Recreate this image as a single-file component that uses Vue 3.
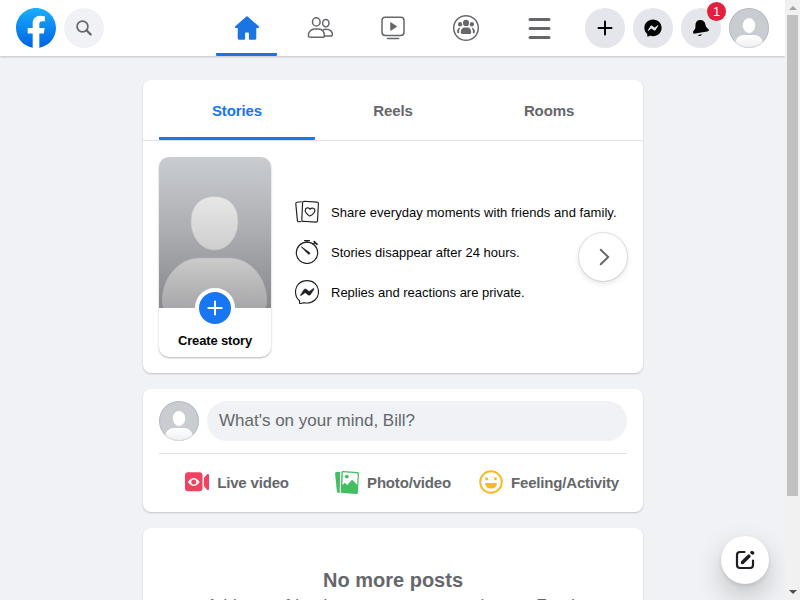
<script setup>
const storyTabs = ['Stories', 'Reels', 'Rooms']
</script>

<template>
  <div class="window">
    <div class="page">
      <header class="topbar">
        <div class="brand">
          <svg class="logo" viewBox="0 0 36 36">
            <defs>
              <linearGradient id="fb" x1="0" y1="0" x2="0" y2="1">
                <stop offset="0" stop-color="#19afff" />
                <stop offset="1" stop-color="#0062e0" />
              </linearGradient>
            </defs>
            <path fill="url(#fb)" d="M15 35.8C6.5 34.3 0 26.9 0 18 0 8.1 8.1 0 18 0s18 8.1 18 18c0 8.9-6.5 16.3-15 17.8l-1-.8h-4l-1 .8z" />
            <path fill="#fff" d="M25 23l.8-5H21v-3.500c0-1.400.5-2.500 2.700-2.500H26V7.400c-1.300-.2-2.700-.4-4-.4-4.100 0-7 2.500-7 7v4h-4.500v5H15v12.700c1 .2 2 .3 3 .3s2-.1 3-.3V23h4z" />
          </svg>
          <div class="search">
            <svg width="20" height="20" viewBox="0 0 20 20" fill="none" stroke="#65676b">
              <circle cx="8.500" cy="8.500" r="5.400" stroke-width="1.700" />
              <path d="M12.500 12.300l4.200 4.200" stroke-width="2.300" stroke-linecap="round" />
            </svg>
          </div>
        </div>

        <nav class="nav">
          <a class="nav-item active">
            <svg width="28" height="28" viewBox="0 0 28 28" fill="#1b74e4">
              <path d="M25.700 12.300 15.200 2.900a1.800 1.800 0 0 0-2.400 0L2.300 12.300c-.8.700-.4 1.700.6 1.700H4.700v10.200c0 .9.600 1.500 1.500 1.500h5.100c.5 0 .8-.3.800-.8v-5.700c0-.5.300-.8.800-.8h2.200c.5 0 .8.300.8.800v5.700c0 .5.300.8.800.8h5.100c.9 0 1.500-.6 1.500-1.500V14h1.800c1 0 1.400-1 .6-1.700z" />
            </svg>
          </a>
          <a class="nav-item">
            <svg width="28" height="28" viewBox="0 0 28 28" fill="none" stroke="#65676b" stroke-width="1.500">
              <ellipse cx="10.300" cy="7.900" rx="3.800" ry="4.200" />
              <ellipse cx="19.800" cy="9.100" rx="3.200" ry="3.600" />
              <path d="M8.500 15h4.300c3.600 0 5.600 3.200 5.600 6.400 0 1.300-.6 1.900-1.800 1.900H4.200c-1.200 0-1.800-.6-1.800-1.900C2.400 18.200 4.900 15 8.500 15z" />
              <path d="M16.600 15.800c1-.5 2-.6 3.700-.6 4 0 6.100 2.800 6.100 5.200 0 1.100-.7 1.600-1.900 1.600h-6" />
            </svg>
          </a>
          <a class="nav-item">
            <svg width="28" height="28" viewBox="0 0 28 28" fill="none" stroke="#65676b" stroke-width="1.500">
              <rect x="3" y="3.300" width="22" height="18.200" rx="3.200" />
              <path d="M8.500 24.500h11" stroke-linecap="round" />
              <path d="M11.200 9v7c0 .6.500.8 1 .5l5.400-3.500c.4-.3.400-.8 0-1l-5.400-3.500c-.5-.3-1-.1-1 .5z" fill="#65676b" stroke="none" />
            </svg>
          </a>
          <a class="nav-item">
            <svg width="28" height="28" viewBox="0 0 28 28" fill="#65676b">
              <circle cx="14" cy="14" r="12.300" fill="none" stroke="#65676b" stroke-width="1.500" />
              <ellipse cx="14" cy="8.900" rx="3" ry="3.200" />
              <ellipse cx="8.100" cy="10.300" rx="2.100" ry="2.200" />
              <ellipse cx="19.900" cy="10.300" rx="2.100" ry="2.200" />
              <path d="M12.100 13.600h3.800c2 0 3.300 2.200 3.300 4.700 0 1.100-.6 1.800-1.700 1.800h-7c-1.100 0-1.700-.7-1.700-1.800 0-2.500 1.300-4.700 3.300-4.700zM8.300 13.800c-1 1.400-1.400 3.300-1.100 5.400H6.200c-.7 0-1.100-.5-1.100-1.200 0-2.400 1.200-4.300 3.200-4.200zM19.700 13.800c1 1.400 1.400 3.300 1.100 5.400h1c.7 0 1.100-.5 1.100-1.200 0-2.400-1.200-4.300-3.200-4.200z" />
            </svg>
          </a>
          <a class="nav-item">
            <svg width="28" height="28" viewBox="0 0 28 28" stroke="#65676b" stroke-width="3" stroke-linecap="round">
              <path d="M5 5.500h19M5 14.500h19M5 23.500h19" />
            </svg>
          </a>
        </nav>

        <div class="actions">
          <div class="round">
            <svg width="20" height="20" viewBox="0 0 20 20" stroke="#050505" stroke-width="2" stroke-linecap="round">
              <path d="M10 3.500v13M3.500 10h13" />
            </svg>
          </div>
          <div class="round">
            <svg width="20" height="20" viewBox="0 0 28 28">
              <path fill="#050505" d="M14 2C7 2 1.900 7.100 1.900 13.700c0 3.500 1.400 6.500 3.700 8.500.2.200.3.400.3.700l.1 2.200c0 .7.700 1.200 1.400.9l2.400-1.100c.2-.1.400-.1.600 0 1.100.3 2.300.5 3.600.5 7 0 12.100-5.100 12.100-11.700S21 2 14 2z" />
              <path fill="#e4e6eb" d="M6.700 17.200l3.600-5.700c.6-.9 1.800-1.100 2.600-.5l2.900 2.200c.2.200.6.200.8 0l3.900-3c.5-.4 1.200.2.800.8l-3.600 5.700c-.6.9-1.800 1.100-2.600.5l-2.900-2.200c-.2-.2-.6-.2-.8 0l-3.900 3c-.5.400-1.200-.2-.8-.8z" />
            </svg>
          </div>
          <div class="round">
            <svg width="20" height="20" viewBox="0 0 20 20" fill="#050505">
              <path d="M8.500 2.100c3-.4 5.500 1.400 5.900 4.400.3 2.100 1 3 2.400 4 1.700 1.200 1.400 2.500-.5 2.900L4.200 15.600c-1.500.3-2.300-.5-2.100-1.700.2-1 1-1.500 1.700-2.600.6-1 .7-1.900.6-3.600C4.300 4.700 5.900 2.500 8.500 2.100z" />
              <path d="M6.700 17l4.200-.8c-.1.900-.8 1.500-1.800 1.700-1 .1-1.900-.2-2.400-.9z" />
            </svg>
            <span class="badge">1</span>
          </div>
          <svg class="avatar" viewBox="0 0 40 40">
            <defs>
              <clipPath id="disc"><circle cx="20" cy="20" r="20" /></clipPath>
              <linearGradient id="body" x1="0" y1="0" x2="0" y2="1">
                <stop offset="0" stop-color="#fff" />
                <stop offset="1" stop-color="#eeeff1" />
              </linearGradient>
            </defs>
            <g clip-path="url(#disc)">
              <rect width="40" height="40" fill="#c9ccd1" />
              <ellipse cx="20" cy="17.500" rx="6.200" ry="7.500" fill="#fff" />
              <path d="M6 40v-4c0-5 4-9 9-9h10c5 0 9 4 9 9v4z" fill="url(#body)" />
            </g>
            <circle cx="20" cy="20" r="19.500" fill="none" stroke="#000" stroke-opacity=".1" />
          </svg>
        </div>
      </header>

      <main class="feed">
        <section class="card">
          <div class="tabs">
            <div v-for="(tab, i) in storyTabs" :key="tab" class="tab" :class="{ active: i === 0 }">{{ tab }}</div>
          </div>
          <div class="stories">
            <div class="story">
              <svg class="portrait" width="112" height="151" viewBox="0 0 112 151">
                <defs>
                  <linearGradient id="bg" x1="0" y1="0" x2="0" y2="1">
                    <stop offset="0" stop-color="#c9ccd1" />
                    <stop offset=".45" stop-color="#aeb0b4" />
                    <stop offset="1" stop-color="#87888c" />
                  </linearGradient>
                  <linearGradient id="head" x1="0" y1="0" x2="0" y2="1">
                    <stop offset="0" stop-color="#e7e7e7" />
                    <stop offset="1" stop-color="#cecece" />
                  </linearGradient>
                  <linearGradient id="torso" x1="0" y1="0" x2="0" y2="1">
                    <stop offset="0" stop-color="#cbcbcb" />
                    <stop offset="1" stop-color="#a7a7a9" />
                  </linearGradient>
                </defs>
                <rect width="112" height="151" fill="url(#bg)" />
                <path d="M55.500 39.500C70 39.500 79 49 79 64.500S69 93 55.500 93 32 80 32 64.500s9-25 23.500-25z" fill="url(#head)" stroke="#bfc0c2" stroke-opacity=".6" />
                <path d="M5 151c-1-2-1.500-4-1.500-8 0-23 17-42 37-42h30c20 0 37 19 37 42 0 4-.5 6-1.500 8z" fill="url(#torso)" stroke="#b8b8ba" stroke-opacity=".6" />
              </svg>
              <div class="plus">
                <svg width="20" height="20" viewBox="0 0 20 20" stroke="#fff" stroke-width="2" stroke-linecap="round">
                  <path d="M10 3.400v13.200M3.400 10h13.200" />
                </svg>
              </div>
              <div class="story-title">Create story</div>
            </div>

            <ul class="facts">
              <li>
                <svg width="24" height="24" viewBox="0 0 24 24" fill="none" stroke="#1c1e21" stroke-width="1.150" stroke-linecap="round" stroke-linejoin="round">
                  <path d="M9 1.300l13.200.8c.8 0 1.300.6 1.200 1.400l-.9 17.300c0 .8-.7 1.400-1.500 1.300l-13-.8c-.8 0-1.300-.6-1.200-1.400l.8-17.200C7.600 1.900 8.200 1.300 9 1.300z" />
                  <path d="M6.300 1.800L2 2.200C1.200 2.300.7 2.800.8 3.700l1.600 16.900c.1.800.6 1.200 1.300 1.100l2.300-.2" />
                  <path d="M14.700 16.100c-2.300-1.600-4.600-3.600-4.500-5.900.1-2.600 3.500-3.300 4.900-.9 1.700-2.200 5-1.200 4.800 1.400-.2 2.200-2.700 4-5.200 5.400z" />
                </svg>
                <span class="spaced">Share everyday moments with friends and family.</span>
              </li>
              <li>
                <svg width="24" height="24" viewBox="0 0 24 24" fill="none" stroke="#1c1e21" stroke-width="1.150" stroke-linecap="round">
                  <circle cx="12" cy="12.800" r="10.700" />
                  <path d="M12 .7v1.500M18.400 4.100l1.500-1.600" />
                  <path d="M9.800.4h4.400M19.200 1.600l2.900 2.700" stroke-width="1.600" />
                  <path d="M6.700 7.100l7.600 5.300c1.400 1-.2 2.700-1.300 1.400z" fill="#1c1e21" stroke-width=".8" />
                </svg>
                <span>Stories disappear after 24 hours.</span>
              </li>
              <li>
                <svg width="24" height="24" viewBox="0 0 24 24" fill="none" stroke="#1c1e21" stroke-width="1.150" stroke-linejoin="round">
                  <path d="M12 .6c6.500 0 11.500 4.700 11.500 11.100S18.500 23 12 23c-1.200 0-2.300-.2-3.400-.3l-3.200 1c-.5.200-.8 0-.8-.5v-2.500C2 18.700.5 15.500.5 11.700.5 5.300 5.500.6 12 .6z" />
                  <path d="M5.500 14.900l3.300-5.200c.6-.8 1.700-1 2.500-.5l2.600 2c.3.200.5.200.8 0l3.500-2.700c.5-.4 1.100.2.800.7l-3.400 5.300c-.5.800-1.600 1-2.400.4l-2.700-2c-.2-.2-.5-.2-.7 0l-3.600 2.700c-.5.400-1-.2-.7-.7z" fill="#1c1e21" stroke="#1c1e21" stroke-width=".4" />
                </svg>
                <span>Replies and reactions are private.</span>
              </li>
            </ul>

            <div class="next">
              <svg width="20" height="20" viewBox="0 0 20 20" fill="none" stroke="#65676b" stroke-width="1.900" stroke-linecap="round" stroke-linejoin="round">
                <path d="M7.700 2.700L15.200 10l-7.500 7.300" />
              </svg>
            </div>
          </div>
        </section>

        <section class="card composer">
          <div class="prompt">
            <svg class="avatar" viewBox="0 0 40 40">
              <g clip-path="url(#disc)">
                <rect width="40" height="40" fill="#c9ccd1" />
                <ellipse cx="20" cy="17.500" rx="6.200" ry="7.500" fill="#fff" />
                <path d="M6 40v-4c0-5 4-9 9-9h10c5 0 9 4 9 9v4z" fill="url(#body)" />
              </g>
              <circle cx="20" cy="20" r="19.500" fill="none" stroke="#000" stroke-opacity=".1" />
            </svg>
            <div class="field">What's on your mind, Bill?</div>
          </div>
          <div class="options">
            <div class="option">
              <svg width="24" height="24" viewBox="0 0 24 24" fill="#f3425f">
                <rect y="2.300" width="17.500" height="19" rx="3" />
                <path d="M19 7.700v8.300l3 3.700c.7.800 2 .4 2-.7V5.200c0-1.200-1.400-1.600-2.100-.8z" />
                <path d="M2.900 12c3.500-5.200 8.200-5.200 11.700 0-3.500 5.200-8.200 5.200-11.700 0z" fill="#fff" />
                <circle cx="8.750" cy="12" r="2.500" />
              </svg>
              <span>Live video</span>
            </div>
            <div class="option">
              <svg width="24" height="24" viewBox="0 0 24 24">
                <path fill="#45bd62" d="M5.200 1.700l-3.700.4C.5 2.200 0 2.800.1 3.800l1.800 17.700c.1.900.8 1.400 1.700 1.300l1.700-.2c-.5-.6-.7-1.200-.6-2z" />
                <path fill="#45bd62" d="M8.100 1l14.300 1c1 .1 1.700.8 1.600 1.800l-1.100 18.600c-.1 1-.8 1.600-1.800 1.500l-13.800-.8c-1-.1-1.600-.8-1.500-1.800L6.400 2.500C6.500 1.500 7.100.9 8.100 1z" />
                <path fill="#fff" d="M8.300 2.300l13.300.9c.7.100 1.100.5 1.100 1.200l-.5 10.400-4.600-4.600c-.3-.3-.7-.3-1 0l-4.300 4.900-2-1.900c-.3-.3-.7-.3-1 0l-1.900 1.900.4-12c0-.5.200-.8.500-.8z" />
                <circle cx="11.800" cy="6.600" r="1.900" fill="#45bd62" />
              </svg>
              <span>Photo/video</span>
            </div>
            <div class="option">
              <svg width="24" height="24" viewBox="0 0 24 24" fill="#f7b928">
                <circle cx="12" cy="12" r="10.800" fill="none" stroke="#f7b928" stroke-width="2" />
                <circle cx="7.600" cy="8.700" r="1.500" />
                <circle cx="16.400" cy="8.700" r="1.500" />
                <path d="M6.800 13h10.400c.5 0 .8.400.7.900-.5 2.800-2.800 4.700-5.900 4.700s-5.400-1.900-5.900-4.700c-.1-.5.2-.9.700-.9z" />
              </svg>
              <span>Feeling/Activity</span>
            </div>
          </div>
        </section>

        <section class="card ending">
          <h2>No more posts</h2>
          <p>Add more friends to see more posts in your Feed.</p>
        </section>
      </main>

      <div class="compose">
        <svg width="20" height="20" viewBox="0 0 20 20" fill="none" stroke="#1c1e21" stroke-linecap="round">
          <path d="M9.500 2H5Q2 2 2 5v10q0 3 3 3h10q3 0 3-3v-4.500" stroke-width="2.200" />
          <path d="M7.700 12.300l6.100-6.100" stroke-width="3.600" />
          <path d="M6.900 11.500l-.6 2.200 2.300-.6z" fill="#1c1e21" stroke-width="1" />
          <path d="M17 2.500l.6.500" stroke-width="3.500" />
        </svg>
      </div>
    </div>

    <div class="scrollbar">
      <svg width="15" height="15" viewBox="0 0 15 15"><path d="M4 10l4-4 4 4z" fill="#a3a3a3" /></svg>
      <div class="thumb"></div>
      <svg width="15" height="15" viewBox="0 0 15 15"><path d="M4 5l4 4 4-4z" fill="#505050" /></svg>
    </div>
  </div>
</template>

<style>
body {
  margin: 0;
  overflow: hidden;
}
</style>

<style scoped>
.window {
  display: flex;
  width: 800px;
  height: 600px;
  overflow: hidden;
  background: #f0f2f5;
  font-family: "Liberation Sans", Arial, sans-serif;
  color: #050505;
}
svg {
  display: block;
  flex: none;
}
.page {
  position: relative;
  width: 785px;
  height: 600px;
  overflow: hidden;
}
.topbar {
  position: relative;
  display: flex;
  height: 56px;
  background: #fff;
  box-shadow: 0 1px 2px rgba(0, 0, 0, 0.2);
}
.brand {
  display: flex;
  align-items: center;
  gap: 8px;
  width: 200px;
  padding-left: 16px;
}
.logo,
.avatar {
  width: 40px;
  height: 40px;
}
.search,
.round {
  display: flex;
  align-items: center;
  justify-content: center;
  width: 40px;
  height: 40px;
  border-radius: 50%;
  background: #f0f2f5;
}
.nav {
  display: flex;
  gap: 12px;
}
.nav-item {
  display: flex;
  align-items: center;
  justify-content: center;
  box-sizing: border-box;
  width: 61px;
  height: 56px;
}
.nav-item.active {
  padding-top: 3px;
  border-bottom: 3px solid #1b74e4;
  border-radius: 1px;
}
.actions {
  display: flex;
  align-items: center;
  gap: 8px;
  margin-left: auto;
  padding-right: 16px;
}
.round {
  position: relative;
  background: #e4e6eb;
}
.badge {
  position: absolute;
  top: -6px;
  right: -5px;
  width: 19px;
  height: 19px;
  border-radius: 50%;
  background: #e41e3f;
  color: #fff;
  font-size: 13px;
  line-height: 19px;
  text-align: center;
}
.feed {
  display: flex;
  flex-direction: column;
  gap: 16px;
  width: 500px;
  margin-left: 143px;
  padding-top: 24px;
}
.card {
  border-radius: 8px;
  background: #fff;
  box-shadow: 0 1px 2px rgba(0, 0, 0, 0.2);
}
.tabs {
  display: flex;
  height: 60px;
  padding: 0 16px;
  border-bottom: 1px solid #e0e1e4;
}
.tab {
  flex: 1;
  box-sizing: border-box;
  padding-top: 3px;
  border-bottom: 3px solid transparent;
  border-radius: 1px;
  font-size: 15px;
  line-height: 56px;
  font-weight: 700;
  letter-spacing: -0.12px;
  text-align: center;
  color: #65676b;
}
.tab.active {
  color: #1876f2;
  border-color: #1876f2;
}
.stories {
  position: relative;
  display: flex;
  gap: 24px;
  padding: 16px;
}
.story {
  position: relative;
  width: 112px;
  height: 200px;
  overflow: hidden;
  border-radius: 10px;
  box-shadow: 0 1px 2px rgba(0, 0, 0, 0.3);
}
.plus {
  position: absolute;
  top: 131px;
  left: 36px;
  display: flex;
  align-items: center;
  justify-content: center;
  width: 32px;
  height: 32px;
  border: 4px solid #fff;
  border-radius: 50%;
  background: #1876f2;
}
.story-title {
  padding-top: 25px;
  font-size: 13px;
  line-height: 16px;
  font-weight: 700;
  letter-spacing: -0.15px;
  text-align: center;
}
.facts {
  display: flex;
  flex-direction: column;
  gap: 16px;
  margin: 43px 0 0;
  padding: 0;
  list-style: none;
}
.facts li {
  display: flex;
  align-items: center;
  gap: 12px;
  height: 24px;
  font-size: 13px;
  white-space: nowrap;
}
.spaced {
  letter-spacing: 0.055px;
}
.next {
  position: absolute;
  top: 92px;
  right: 16px;
  display: flex;
  align-items: center;
  justify-content: center;
  width: 48px;
  height: 48px;
  border-radius: 50%;
  background: #fff;
  box-shadow: 0 0 0 1px rgba(0, 0, 0, 0.1), 0 2px 6px rgba(0, 0, 0, 0.12);
}
.composer {
  height: 111px;
  padding: 12px 16px 0;
}
.prompt {
  display: flex;
  gap: 8px;
  padding-bottom: 12px;
  border-bottom: 1px solid #e0e1e4;
}
.field {
  flex: 1;
  padding: 0 12px;
  border-radius: 20px;
  background: #f0f2f5;
  color: #65676b;
  font-size: 17px;
  line-height: 39px;
  height: 40px;
}
.options {
  display: flex;
  height: 56px;
}
.option {
  flex: 1 1 0;
  display: flex;
  align-items: center;
  justify-content: center;
  gap: 8px;
  color: #65676b;
  font-size: 15px;
  font-weight: 700;
  letter-spacing: -0.18px;
  white-space: nowrap;
}
.ending {
  height: 120px;
  padding-top: 40px;
  text-align: center;
  color: #65676b;
}
.ending h2 {
  margin: 0;
  font-size: 20px;
  line-height: 24px;
}
.ending p {
  margin: 4px 0 0;
  font-size: 17px;
  line-height: 20px;
}
.compose {
  position: absolute;
  right: 16px;
  bottom: 16px;
  display: flex;
  align-items: center;
  justify-content: center;
  width: 48px;
  height: 48px;
  border-radius: 50%;
  background: #fff;
  box-shadow: 0 2px 4px rgba(0, 0, 0, 0.1), 0 12px 28px rgba(0, 0, 0, 0.2);
}
.scrollbar {
  display: flex;
  flex-direction: column;
  justify-content: space-between;
  width: 15px;
  height: 600px;
  background: #f1f1f1;
}
.thumb {
  width: 11px;
  height: 481px;
  margin: 0 2px auto;
  background: #c1c1c1;
}
</style>
